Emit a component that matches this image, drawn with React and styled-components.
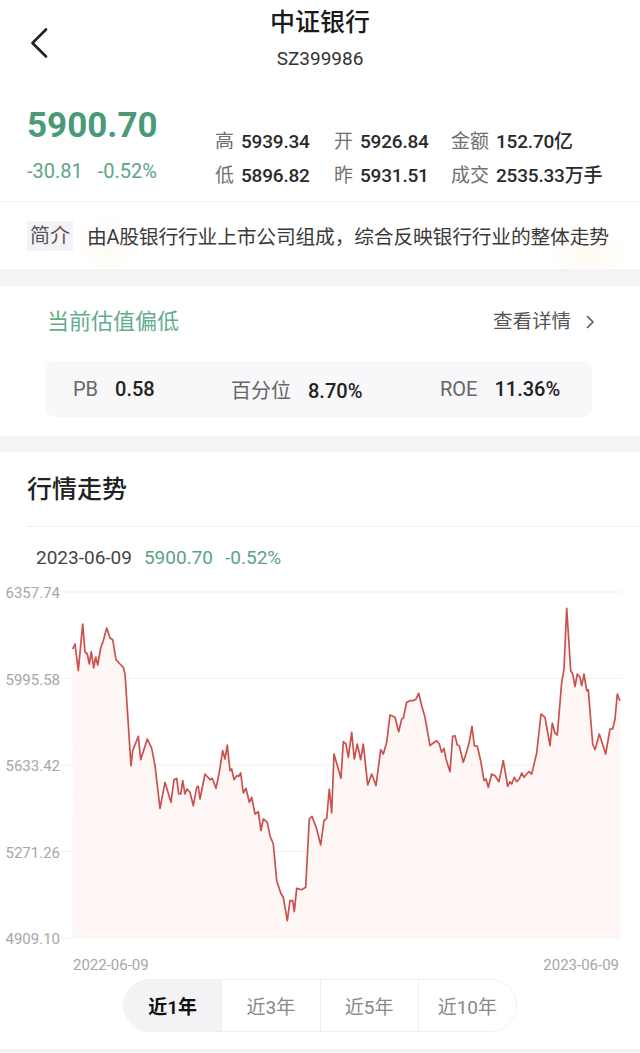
import React from 'react';
import styled, { createGlobalStyle } from 'styled-components';

const GlobalStyle = createGlobalStyle`
  body {
    margin: 0;
    background: #fff;
    font-family: Roboto, "Noto Sans CJK SC", sans-serif;
    color: #222;
  }
`;

const Page = styled.div`
  width: 640px;
  overflow: hidden;
`;

const Header = styled.header`
  display: grid;
  grid-template-columns: 80px 1fr 80px;
  height: 90px;
`;

const BackBtn = styled.div`
  padding: 28px 0 0 30px;
`;

const TitleBlock = styled.div`
  display: flex;
  flex-direction: column;
  align-items: center;
  padding-top: 8px;
`;

const Title = styled.div`
  font-size: 25px;
  line-height: 30px;
  font-weight: 500;
  color: #1a1a1a;
`;

const Code = styled.div`
  margin-top: 9px;
  font-size: 19px;
  line-height: 24px;
  color: #333;
`;

const Quote = styled.section`
  display: flex;
  height: 112px;
  box-sizing: border-box;
  padding: 16px 0 0 27px;
  border-bottom: 1px solid #efeff1;
`;

const PriceBlock = styled.div`
  width: 188px;
`;

const Price = styled.div`
  font-size: 35px;
  line-height: 40px;
  font-weight: 700;
  color: #4a9a77;
`;

const Change = styled.div`
  display: flex;
  gap: 15px;
  margin-top: 13px;
  font-size: 20px;
  line-height: 24px;
  color: #5ea584;
`;

const Stats = styled.div`
  display: grid;
  grid-template-columns: 119px 117px auto;
  row-gap: 10px;
  margin-top: 24px;
  align-content: start;
`;

const Stat = styled.div`
  display: flex;
  align-items: baseline;
  gap: 7px;
  font-size: 19px;
  line-height: 24px;
  white-space: nowrap;
`;

const StatLabel = styled.span`
  color: #707070;
`;

const StatValue = styled.span`
  color: #2a2a2a;
  font-weight: 500;
  letter-spacing: -0.2px;
`;

const Intro = styled.section`
  display: flex;
  align-items: center;
  gap: 14px;
  height: 67px;
  box-sizing: border-box;
  padding: 0 0 0 27px;
  background:
    radial-gradient(ellipse 30px 40px at 108px 45px, rgba(255, 214, 120, 0.08), transparent),
    radial-gradient(ellipse 40px 35px at 590px 55px, rgba(255, 214, 120, 0.1), transparent);
`;

const Tag = styled.span`
  flex-shrink: 0;
  height: 30px;
  line-height: 30px;
  padding: 0 3px;
  background: #f4f2f6;
  color: #555;
  font-size: 20px;
  white-space: nowrap;
`;

const IntroText = styled.span`
  font-size: 19.8px;
  letter-spacing: -0.2px;
  color: #3a3a3a;
  white-space: nowrap;
`;

const Band = styled.div`
  height: ${(p) => p.h}px;
  background: #f4f3f6;
`;

const Valuation = styled.section`
  padding: 21px 45px 19px 47px;
`;

const ValRow = styled.div`
  display: flex;
  justify-content: space-between;
  align-items: center;
  line-height: 30px;
`;

const ValTitle = styled.div`
  font-size: 22px;
  color: #62ad8c;
`;

const DetailLink = styled.div`
  display: flex;
  align-items: center;
  gap: 15px;
  font-size: 19.5px;
  color: #555;
`;

const MetricBox = styled.div`
  display: grid;
  grid-template-columns: 158px 209px 1fr;
  align-items: center;
  height: 56px;
  margin: 24px 3px 0 -1px;
  padding-left: 27px;
  background: #f8f7fa;
  border-radius: 8px;
`;

const Metric = styled.div`
  display: flex;
  align-items: baseline;
  gap: 17px;
  font-size: 20px;
`;

const MetricLabel = styled.span`
  color: #666;
`;

const MetricValue = styled.span`
  color: #222;
  font-weight: 500;
`;

const ChartSection = styled.section`
  padding-top: 21px;
`;

const SectionTitle = styled.h2`
  margin: 0;
  padding-left: 27px;
  font-size: 25px;
  line-height: 34px;
  font-weight: 500;
  color: #222;
`;

const Divider = styled.div`
  margin: 19px 0 0 27px;
  border-top: 1px solid #efefef;
`;

const PointInfo = styled.div`
  display: flex;
  gap: 12px;
  margin-top: 19px;
  padding-left: 36px;
  font-size: 19px;
  line-height: 24px;
  color: #444;
`;

const Green = styled.span`
  color: #5aa382;
`;

const ChartSvg = styled.svg`
  display: block;
  margin-top: 9px;
`;

const TabsWrap = styled.div`
  display: flex;
  justify-content: center;
  padding: 2px 0 17px;
`;

const Tabs = styled.div`
  display: flex;
  width: 394px;
  height: 53px;
  box-sizing: border-box;
  border: 1px solid #efeff1;
  border-radius: 27px;
  overflow: hidden;
`;

const Tab = styled.div`
  flex: 1;
  display: flex;
  align-items: center;
  justify-content: center;
  font-size: 19px;
  color: ${(p) => (p.active ? '#111' : '#888')};
  font-weight: ${(p) => (p.active ? 600 : 400)};
  background: ${(p) => (p.active ? '#f3f2f5' : '#fff')};
  & + & {
    border-left: 1px solid #f0f0f2;
  }
`;

const points = [
  [72.7,650],[75,645],[78.3,671.7],[82.7,625],[85,653],[87.3,655],[89.3,665],[91.3,652.7],[93.7,669],[95.7,658],
  [97.7,666],[100.7,649],[103.3,641.7],[106.7,629],[110,639],[112.7,640.7],[116,660.7],[120,665],[123.3,668.3],[125,675],
  [131,766.7],[132.7,751.7],[138.3,737.3],[140.7,760.7],[147.3,740],[151.7,749.3],[155,766.7],[160,809.3],[165,783.3],[171,803.3],
  [174,780.7],[176.7,779.3],[178.7,795],[180.7,795],[182.7,781.7],[185,795],[187,790],[190,793.3],[193.3,806.7],[196.7,788.3],
  [198.3,787.3],[200,800],[205,775],[210,780.7],[212.3,779.3],[216,789.3],[219.3,773.3],[222.7,751.7],[225,760],[227.3,746],
  [230,771.7],[231.7,770],[234,780.7],[236.7,776.7],[238.7,777.3],[240.7,774],[243.3,794],[246,789.3],[249.3,803.3],[251.7,798.3],
  [255,815],[258.3,812.7],[261,831.7],[263.3,820],[267.3,823.3],[270,836.7],[273.3,845],[276.7,881.7],[280.7,894],[283.3,898.3],
  [287.3,921.7],[290,901.7],[292.7,901.7],[294.3,912.7],[296.7,889.3],[301.7,890.7],[305.7,888.3],[309.3,820],[312,817.3],[316.7,830],
  [320.7,846],[324,821.7],[326.7,819.3],[329.3,790],[331.7,814],[334,755],[341,779.3],[343.3,742.7],[346,745],[348.3,758.3],
  [351.7,733.3],[354.3,760],[357.3,745],[360.7,760.7],[363.3,745],[367.7,786],[371.7,775],[376,786.7],[380.7,750.7],[383.3,755],
  [386.7,743.3],[390,716],[395,718.3],[398.7,732.7],[401.7,720],[403.3,719.3],[406.7,703.3],[410,701.7],[413.3,701.7],[416,700],
  [418.7,694.3],[421.7,706.7],[425,718.3],[430,746.7],[433.3,744],[436.7,741.7],[439.3,745],[441.7,753.3],[444,749.3],[446,760],
  [450,772.7],[452.7,737.3],[455,736.7],[457.3,746],[459.3,746.7],[463.3,763.3],[466.7,752.7],[469.3,742.7],[472,727.3],[474.3,746.7],
  [477.3,747.3],[480.7,761.7],[484,781.7],[486,780],[488.3,788.3],[491.7,775],[495,776.7],[499,782.7],[503.3,761.7],[507.7,787.3],
  [510,782.7],[511.7,785],[514.3,778.3],[516.7,782.7],[519.3,780],[521.7,774],[524,778.3],[526.7,775],[529,772.7],[531.7,775],
  [536.7,754],[541,715],[545,718.3],[550,746.7],[552.3,724],[555,734],[557.3,736],[561.7,683.3],[564,670],[566.7,609.3],
  [570.7,671.7],[572.7,675],[575,687.7],[577.3,675],[580,678.3],[581.7,686.7],[584,675],[586.7,691.7],[588.3,690.7],[592.7,745],
  [595,750.7],[599.3,735],[605.7,755],[610,730],[612.7,730],[615,720],[617.3,695],[620,701.7],
];

const yLabels = ['6357.74', '5995.58', '5633.42', '5271.26', '4909.10'];
const tabs = ['近1年', '近3年', '近5年', '近10年'];

function TrendChart() {
  const line = points.map((p) => p.join(',')).join(' ');
  const area = `${line} 620,939 72.7,939`;
  return (
    <ChartSvg width="640" height="398" viewBox="0 580 640 398">
      {yLabels.map((label, i) => {
        const y = 593 + i * 86.5;
        return (
          <g key={label}>
            <line x1="60" x2="622" y1={y} y2={y} stroke="#f1f1f3" strokeWidth="1" />
            <text x="60" y={y + 6} textAnchor="end" fontSize="15" fill="#a6a6a6" fontFamily="Roboto, sans-serif">
              {label}
            </text>
          </g>
        );
      })}
      <polygon points={area} fill="#fdf4f2" opacity="0.7" />
      <polyline points={line} fill="none" stroke="#c9514e" strokeWidth="1.7" strokeLinejoin="round" />
      <text x="73" y="971" fontSize="15" fill="#a6a6a6" fontFamily="Roboto, sans-serif">2022-06-09</text>
      <text x="619" y="971" textAnchor="end" fontSize="15" fill="#a6a6a6" fontFamily="Roboto, sans-serif">2023-06-09</text>
    </ChartSvg>
  );
}

export default function App() {
  return (
    <Page>
      <GlobalStyle />
      <Header>
        <BackBtn>
          <svg width="18" height="30" viewBox="0 0 18 30">
            <path d="M16 1.5 L2.5 15 L16 28.5" fill="none" stroke="#222" strokeWidth="2.6" strokeLinecap="round" strokeLinejoin="round" />
          </svg>
        </BackBtn>
        <TitleBlock>
          <Title>中证银行</Title>
          <Code>SZ399986</Code>
        </TitleBlock>
        <div />
      </Header>

      <Quote>
        <PriceBlock>
          <Price>5900.70</Price>
          <Change>
            <span>-30.81</span>
            <span>-0.52%</span>
          </Change>
        </PriceBlock>
        <Stats>
          <Stat><StatLabel>高</StatLabel><StatValue>5939.34</StatValue></Stat>
          <Stat><StatLabel>开</StatLabel><StatValue>5926.84</StatValue></Stat>
          <Stat><StatLabel>金额</StatLabel><StatValue>152.70亿</StatValue></Stat>
          <Stat><StatLabel>低</StatLabel><StatValue>5896.82</StatValue></Stat>
          <Stat><StatLabel>昨</StatLabel><StatValue>5931.51</StatValue></Stat>
          <Stat><StatLabel>成交</StatLabel><StatValue>2535.33万手</StatValue></Stat>
        </Stats>
      </Quote>

      <Intro>
        <Tag>简介</Tag>
        <IntroText>由A股银行行业上市公司组成，综合反映银行行业的整体走势</IntroText>
      </Intro>

      <Band h={17} />

      <Valuation>
        <ValRow>
          <ValTitle>当前估值偏低</ValTitle>
          <DetailLink>
            查看详情
            <svg width="9" height="14" viewBox="0 0 9 14">
              <path d="M1.5 1.5 L7 7 L1.5 12.5" fill="none" stroke="#555" strokeWidth="1.6" strokeLinecap="round" strokeLinejoin="round" />
            </svg>
          </DetailLink>
        </ValRow>
        <MetricBox>
          <Metric><MetricLabel>PB</MetricLabel><MetricValue>0.58</MetricValue></Metric>
          <Metric><MetricLabel>百分位</MetricLabel><MetricValue>8.70%</MetricValue></Metric>
          <Metric><MetricLabel>ROE</MetricLabel><MetricValue>11.36%</MetricValue></Metric>
        </MetricBox>
      </Valuation>

      <Band h={16} />

      <ChartSection>
        <SectionTitle>行情走势</SectionTitle>
        <Divider />
        <PointInfo>
          <span>2023-06-09</span>
          <Green>5900.70</Green>
          <Green>-0.52%</Green>
        </PointInfo>
        <TrendChart />
        <TabsWrap>
          <Tabs>
            {tabs.map((t, i) => (
              <Tab key={t} active={i === 0}>{t}</Tab>
            ))}
          </Tabs>
        </TabsWrap>
      </ChartSection>

      <Band h={20} />
    </Page>
  );
}
